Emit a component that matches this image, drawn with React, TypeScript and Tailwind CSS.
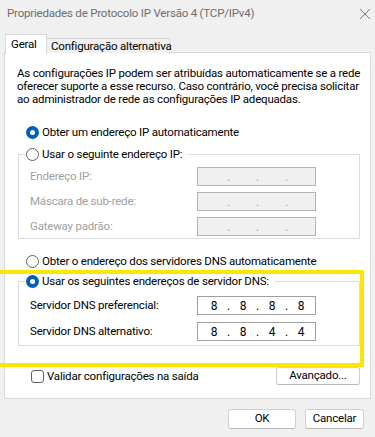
import React from "react";

const font = { fontFamily: 'Roboto, "Liberation Sans", sans-serif' };

function Radio({ checked }: { checked?: boolean }) {
  return checked ? (
    <span className="flex h-[13px] w-[13px] shrink-0 items-center justify-center rounded-full bg-[#005fb8]">
      <span className="h-[5px] w-[5px] rounded-full bg-white" />
    </span>
  ) : (
    <span className="h-[13px] w-[13px] shrink-0 rounded-full border border-[#5f5f5f] bg-white" />
  );
}

function IpBox({ value, disabled }: { value?: string[]; disabled?: boolean }) {
  const parts = value ?? ["", "", "", ""];
  return (
    <div
      className={`flex h-[19px] w-[119px] shrink-0 items-center pl-[5px] text-[12px] leading-none ${
        disabled ? "border border-[#b4b4b4] bg-[#f0f0f0] text-[#a0a0a0]" : "border border-[#a0a0a0] bg-white text-black"
      }`}
    >
      {parts.map((p, i) => (
        <React.Fragment key={i}>
          <span className="w-[22px] text-center">{p}</span>
          {i < 3 && <span className="w-[7px] text-center">.</span>}
        </React.Fragment>
      ))}
    </div>
  );
}

function Row({ label, value, disabled }: { label: string; value?: string[]; disabled?: boolean }) {
  return (
    <div className="flex items-center justify-between">
      <span className={disabled ? "text-[#a0a0a0]" : "text-black"}>{label}</span>
      <IpBox value={value} disabled={disabled} />
    </div>
  );
}

export default function App() {
  return (
    <div
      className="relative h-[437px] w-[375px] overflow-hidden bg-[#f0f0f0] text-[11.5px] leading-[13px] tracking-[-0.2px] text-black"
      style={font}
    >
      {/* title bar */}
      <div className="flex h-[34px] items-start justify-between pl-[7px] pr-[3px] pt-[7px]">
        <span className="whitespace-nowrap text-[#6e6e6e]">Propriedades de Protocolo IP Versão 4 (TCP/IPv4)</span>
        <svg width="12" height="12" viewBox="0 0 12 12" className="mr-[1px] mt-[1px]">
          <path d="M1 1 L11 11 M11 1 L1 11" stroke="#7a7a7a" strokeWidth="1" />
        </svg>
      </div>

      {/* tabs */}
      <div className="relative z-10 flex items-end pl-[5px]">
        <div className="-mb-px flex h-[20px] w-[42px] items-start whitespace-nowrap border border-b-0 border-[#d9d9d9] bg-white pl-[5px] pt-[3px]">
          Geral
        </div>
        <div className="flex h-[15px] w-[123px] items-start whitespace-nowrap border border-b-0 border-l-0 border-[#d9d9d9] bg-[#f0f0f0] pl-[4px] pt-[1px]">
          Configuração alternativa
        </div>
      </div>

      {/* panel */}
      <div className="mx-[4px] -mt-px h-[347px] border border-[#d9d9d9] bg-white pt-[14px]">
        <p className="pl-[12px] pr-[4px] leading-[13px]">
          As configurações IP podem ser atribuídas automaticamente se a rede oferecer suporte a esse recurso. Caso contrário, você precisa solicitar ao administrador de rede as configurações IP adequadas.
        </p>

        <div className="mt-[19px] flex h-[14px] items-center gap-[3px] pl-[21px]">
          <Radio checked />
          <span>Obter um endereço IP automaticamente</span>
        </div>

        <fieldset className="ml-[13px] mr-[10px] mt-[8px] border border-[#dcdcdc] pb-[2px]">
          <legend className="ml-[7px] flex h-[14px] items-center gap-[3px] pr-[6px]">
            <Radio />
            <span>Usar o seguinte endereço IP:</span>
          </legend>
          <div className="mt-[6px] flex flex-col gap-[6px] pl-[11px] pr-[43px]">
            <Row label="Endereço IP:" disabled />
            <Row label="Máscara de sub-rede:" disabled />
            <Row label="Gateway padrão:" disabled />
          </div>
        </fieldset>

        <div className="mt-[15px] flex h-[14px] items-center gap-[3px] pl-[21px]">
          <Radio />
          <span>Obter o endereço dos servidores DNS automaticamente</span>
        </div>

        <fieldset className="ml-[13px] mr-[10px] mt-[6px] border border-[#dcdcdc] pb-[4px]">
          <legend className="ml-[7px] flex h-[14px] items-center gap-[3px] pr-[6px]">
            <Radio checked />
            <span>Usar os seguintes endereços de servidor DNS:</span>
          </legend>
          <div className="mt-[8px] flex flex-col gap-[7px] pl-[11px] pr-[43px]">
            <Row label="Servidor DNS preferencial:" value={["8", "8", "8", "8"]} />
            <Row label="Servidor DNS alternativo:" value={["8", "8", "4", "4"]} />
          </div>
        </fieldset>

        <div className="ml-[26px] mr-[10px] mt-[21px] flex items-center justify-between">
          <div className="flex items-center gap-[3px]">
            <span className="h-[13px] w-[13px] rounded-[3px] border border-[#5f5f5f] bg-white" />
            <span>Validar configurações na saída</span>
          </div>
          <button className="h-[18px] w-[84px] rounded-[3px] border border-[#d0d0d0] border-b-[#b8b8b8] bg-white leading-none">
            Avançado...
          </button>
        </div>
      </div>

      {/* buttons */}
      <div className="mt-[10px] flex justify-end gap-[9px] pr-[11px]">
        <button className="h-[20px] w-[68px] rounded-[3px] border border-[#d0d0d0] border-b-[#b8b8b8] bg-white leading-none">
          OK
        </button>
        <button className="h-[20px] w-[59px] rounded-[3px] border border-[#d0d0d0] border-b-[#b8b8b8] bg-white leading-none">
          Cancelar
        </button>
      </div>

      {/* highlight annotation */}
      <div className="pointer-events-none absolute left-[-4px] top-[270px] h-[97px] w-[368px] border-4 border-[#ffe600]" />
    </div>
  );
}
